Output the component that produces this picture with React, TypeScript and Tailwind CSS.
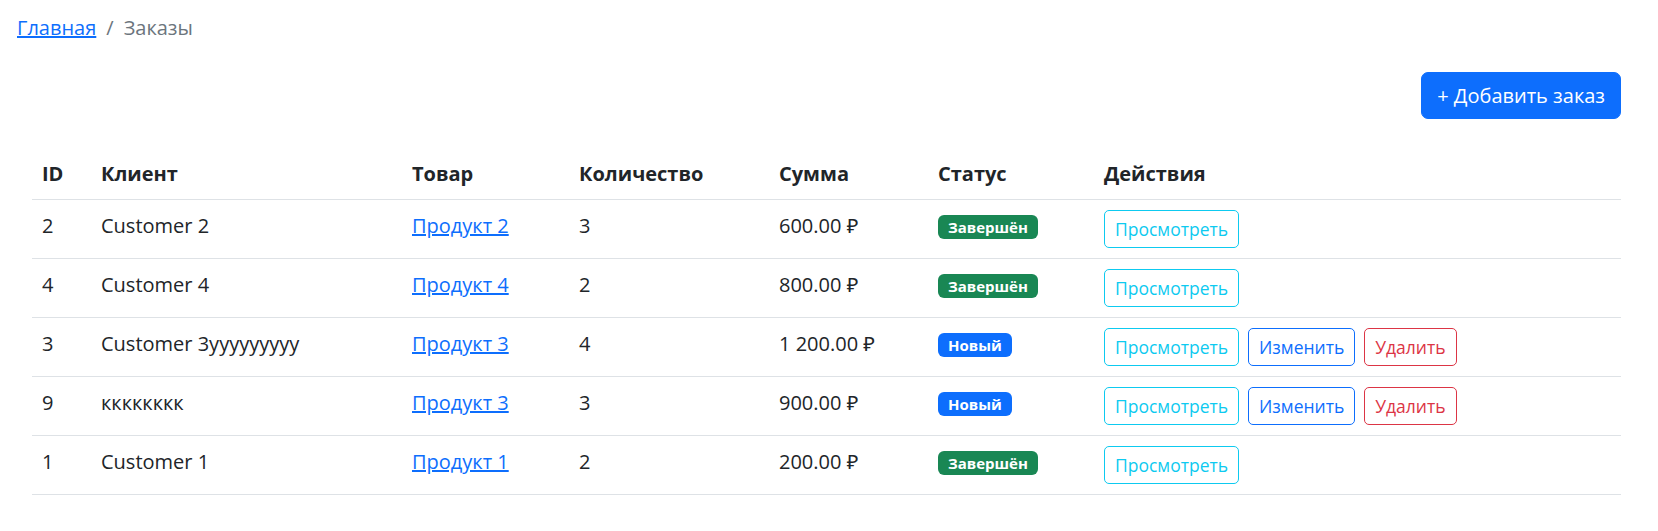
import React from 'react'

type Order = {
  id: number
  client: string
  product: string
  qty: number
  sum: string
  status: 'done' | 'new'
}

const orders: Order[] = [
  { id: 2, client: 'Customer 2', product: 'Продукт 2', qty: 3, sum: '600.00 ₽', status: 'done' },
  { id: 4, client: 'Customer 4', product: 'Продукт 4', qty: 2, sum: '800.00 ₽', status: 'done' },
  { id: 3, client: 'Customer 3yyyyyyyyy', product: 'Продукт 3', qty: 4, sum: '1 200.00 ₽', status: 'new' },
  { id: 9, client: 'кккккккк', product: 'Продукт 3', qty: 3, sum: '900.00 ₽', status: 'new' },
  { id: 1, client: 'Customer 1', product: 'Продукт 1', qty: 2, sum: '200.00 ₽', status: 'done' },
]

const btn = 'inline-block border rounded-[5px] px-[10px] py-[5px] text-[17.5px] leading-[26px] bg-white'
const cell = 'px-[10px] pt-[11px] pb-[10px] border-b border-[#dee2e6] align-top'

export default function App() {
  return (
    <div className="min-h-screen bg-white text-[#212529] font-['Open_Sans','Noto_Sans',sans-serif] text-[20px] leading-[30px]">
      {/* хлебные крошки */}
      <nav className="pt-[13px] pl-[17px] flex">
        <a href="#" className="text-[#0d6efd] underline">Главная</a>
        <span className="px-[10px] text-[#6c757d]">/</span>
        <span className="text-[#6c757d]">Заказы</span>
      </nav>

      <div className="mt-[29px] pr-[37px] flex justify-end">
        <button className="bg-[#0d6efd] text-white border border-[#0d6efd] rounded-[7px] px-[15px] py-[7.5px] text-[20px] leading-[30px]">
          + Добавить заказ
        </button>
      </div>

      <table className="mt-[30px] ml-[32px] w-[1589px] table-fixed border-collapse">
        <thead>
          <tr className="text-left align-bottom">
            <th className="w-[59px] px-[10px] py-[10px] font-bold border-b border-[#dee2e6]">ID</th>
            <th className="w-[311px] px-[10px] py-[10px] font-bold border-b border-[#dee2e6]">Клиент</th>
            <th className="w-[167px] px-[10px] py-[10px] font-bold border-b border-[#dee2e6]">Товар</th>
            <th className="w-[200px] px-[10px] py-[10px] font-bold border-b border-[#dee2e6]">Количество</th>
            <th className="w-[159px] px-[10px] py-[10px] font-bold border-b border-[#dee2e6]">Сумма</th>
            <th className="w-[166px] px-[10px] py-[10px] font-bold border-b border-[#dee2e6]">Статус</th>
            <th className="w-[527px] px-[10px] py-[10px] font-bold border-b border-[#dee2e6]">Действия</th>
          </tr>
        </thead>
        <tbody>
          {orders.map(o => (
            <tr key={o.id}>
              <td className={cell}>{o.id}</td>
              <td className={`${cell} whitespace-nowrap`}>{o.client}</td>
              <td className={cell}>
                <a href="#" className="text-[#0d6efd] underline">{o.product}</a>
              </td>
              <td className={cell}>{o.qty}</td>
              <td className={`${cell} whitespace-nowrap`}>{o.sum}</td>
              <td className="px-[10px] pt-[15px] pb-[10px] border-b border-[#dee2e6] align-top">
                {o.status === 'done' ? (
                  <span className="inline-block align-top rounded-[6px] bg-[#198754] text-white font-bold text-[15px] leading-none px-[10px] py-[4.5px]">Завершён</span>
                ) : (
                  <span className="inline-block align-top rounded-[6px] bg-[#0d6efd] text-white font-bold text-[15px] leading-none px-[10px] py-[4.5px]">Новый</span>
                )}
              </td>
              <td className="px-[10px] py-[10px] border-b border-[#dee2e6] align-top">
                <div className="flex gap-[9px]">
                  <button className={`${btn} border-[#0dcaf0] text-[#0dcaf0]`}>Просмотреть</button>
                  {o.status === 'new' && (
                    <>
                      <button className={`${btn} border-[#0d6efd] text-[#0d6efd]`}>Изменить</button>
                      <button className={`${btn} border-[#dc3545] text-[#dc3545]`}>Удалить</button>
                    </>
                  )}
                </div>
              </td>
            </tr>
          ))}
        </tbody>
      </table>
    </div>
  )
}
